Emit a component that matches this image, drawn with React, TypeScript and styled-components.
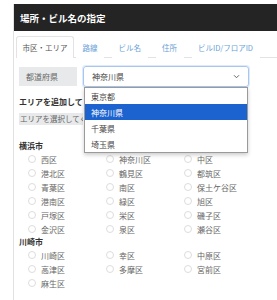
import styled, { createGlobalStyle } from 'styled-components'

const GlobalStyle = createGlobalStyle`
  body {
    margin: 0;
    background: #fff;
    font-family: "Noto Sans CJK JP", "Noto Sans", sans-serif;
    color: #333;
    overflow: hidden;
  }
`

//#region
const Page = styled.div`
  padding: 4px 0 0 13px;
`
const Panel = styled.div`
  border-left: 1px solid #e2e2e2;
  height: 300px;
`
const Header = styled.div`
  height: 27px;
  background: #242424;
  color: #fff;
  font-size: 9.5px;
  font-weight: 700;
  display: flex;
  align-items: center;
  padding-left: 6px;
`
const Tabs = styled.div`
  display: flex;
  margin: 5px 0 0 2px;
  border-bottom: 1px solid #e3e3e3;
  height: 21px;
`
const Tab = styled.div<{ $active?: boolean }>`
  font-size: 7.5px;
  white-space: nowrap;
  padding: 0 5.5px;
  margin-right: ${p => (p.$active ? '2px' : '8px')};
  display: flex;
  align-items: center;
  color: ${p => (p.$active ? '#555' : '#6a9fd8')};
  background: #fff;
  border: 1px solid ${p => (p.$active ? '#e3e3e3' : 'transparent')};
  border-bottom: none;
  margin-bottom: -1px;
  border-radius: 3px 3px 0 0;
`
const Content = styled.div`
  padding: 8px 0 0 5px;
`
const FormRow = styled.div`
  display: flex;
  gap: 6px;
  align-items: center;
  height: 21px;
`
const FieldLabel = styled.div`
  width: 58px;
  height: 19px;
  background: #e8e9ea;
  font-size: 8px;
  color: #666;
  display: flex;
  align-items: center;
  padding-left: 7px;
  box-sizing: border-box;
`
const SelectWrap = styled.div`
  position: relative;
  width: 166px;
`
const SelectBox = styled.div`
  height: 21px;
  box-sizing: border-box;
  border: 1px solid #a9c6ee;
  border-radius: 3px;
  box-shadow: 0 0 0 1px rgba(160, 195, 240, 0.35);
  display: flex;
  align-items: center;
  justify-content: space-between;
  padding: 0 8px;
  font-size: 8px;
  color: #444;
`
const Dropdown = styled.ul`
  position: absolute;
  top: 21px;
  left: 1px;
  right: 1px;
  margin: 0;
  padding: 0;
  list-style: none;
  background: #fff;
  border: 1px solid #9a9a9a;
  box-shadow: 0 2px 4px rgba(0, 0, 0, 0.2);
  z-index: 2;
`
const Option = styled.li<{ $selected?: boolean }>`
  height: 16px;
  display: flex;
  align-items: center;
  padding-left: 6px;
  font-size: 8px;
  color: ${p => (p.$selected ? '#fff' : '#444')};
  background: ${p => (p.$selected ? '#1d63d0' : '#fff')};
`
const Clip = styled.div`
  width: 64px;
  overflow: hidden;
`
const AddTitle = styled.div`
  font-size: 8px;
  line-height: 12px;
  font-weight: 700;
  color: #333;
  margin-top: 9px;
  white-space: nowrap;
`
const SelectHint = styled.div`
  font-size: 7.5px;
  line-height: 12px;
  color: #666;
  background: #e8e9ea;
  padding-left: 1px;
  margin-top: 5px;
  white-space: nowrap;
`
const CityTitle = styled.div<{ $first?: boolean }>`
  font-size: 8px;
  font-weight: 700;
  color: #333;
  height: 12px;
  line-height: 12px;
  margin-top: ${p => (p.$first ? '15px' : '0')};
`
const WardGrid = styled.div`
  display: grid;
  grid-template-columns: repeat(3, 78px);
  padding-left: 9px;
`
const Ward = styled.label`
  display: flex;
  align-items: center;
  gap: 5px;
  height: 14px;
  font-size: 8px;
  color: #666;
  white-space: nowrap;
`
const Radio = styled.span`
  width: 8px;
  height: 8px;
  border-radius: 50%;
  border: 1px solid #ddd;
  box-sizing: border-box;
  background: #fff;
  flex: none;
`
//#endregion

const prefs = ['東京都', '神奈川県', '千葉県', '埼玉県']

const cities = [
  {
    name: '横浜市',
    wards: ['西区', '神奈川区', '中区', '港北区', '鶴見区', '都筑区', '青葉区', '南区', '保土ケ谷区', '港南区', '緑区', '旭区', '戸塚区', '栄区', '磯子区', '金沢区', '泉区', '瀬谷区'],
  },
  {
    name: '川崎市',
    wards: ['川崎区', '幸区', '中原区', '高津区', '多摩区', '宮前区', '麻生区'],
  },
]

export default function App() {
  return (
    <>
      <GlobalStyle />
      <Page>
        <Panel>
          <Header>場所・ビル名の指定</Header>
          <Tabs>
            <Tab $active>市区・エリア</Tab>
            <Tab>路線</Tab>
            <Tab>ビル名</Tab>
            <Tab>住所</Tab>
            <Tab>ビルID/フロアID</Tab>
          </Tabs>
          <Content>
            <FormRow>
              <FieldLabel>都道府県</FieldLabel>
              <SelectWrap>
                <SelectBox>
                  <span>神奈川県</span>
                  <svg width="7" height="5" viewBox="0 0 8 6">
                    <path d="M1 1.5 L4 4.5 L7 1.5" fill="none" stroke="#666" strokeWidth="1.2" />
                  </svg>
                </SelectBox>
                <Dropdown>
                  {prefs.map(p => (
                    <Option key={p} $selected={p === '神奈川県'}>{p}</Option>
                  ))}
                </Dropdown>
              </SelectWrap>
            </FormRow>
            <Clip>
              <AddTitle>エリアを追加してください</AddTitle>
              <SelectHint>エリアを選択してください</SelectHint>
            </Clip>
            {cities.map((c, i) => (
              <div key={c.name}>
                <CityTitle $first={i === 0}>{c.name}</CityTitle>
                <WardGrid>
                  {c.wards.map(w => (
                    <Ward key={w}>
                      <Radio />
                      {w}
                    </Ward>
                  ))}
                </WardGrid>
              </div>
            ))}
          </Content>
        </Panel>
      </Page>
    </>
  )
}
